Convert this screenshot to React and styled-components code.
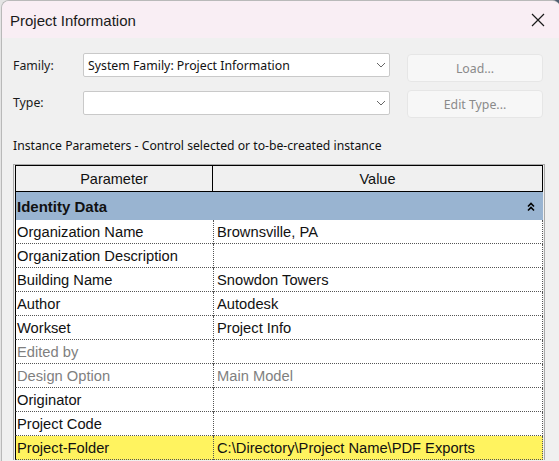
import React from "react";
import styled, { createGlobalStyle } from "styled-components";

const Global = createGlobalStyle`
  html, body { margin: 0; padding: 0; }
  body {
    width: 559px; height: 461px; overflow: hidden;
    background: linear-gradient(90deg, #e4e4e4 0%, #e4e4e4 70%, #5d6b7d 85%, #4e5c70 100%);
    font-family: "Noto Sans", "Liberation Sans", sans-serif;
  }
`;

const Window = styled.div`
  width: 559px; height: 461px; box-sizing: border-box;
  margin-left: 1px;
  border: 1px solid #b9b9b9; border-bottom: none; border-right: none;
  border-radius: 8px 8px 0 0; overflow: hidden;
  background: #f0f0f0; display: flex; flex-direction: column;
`;

const TitleBar = styled.div`
  height: 36px; flex: none; background: #f9eef4;
  display: flex; align-items: center; justify-content: space-between;
  padding: 1px 15px 0 8px;
`;

const Title = styled.span`
  font-family: "Liberation Sans", Arial, sans-serif;
  font-size: 15px; color: #1a1a1a;
`;

const Body = styled.div`
  padding: 16px 0 0 11px; display: flex; flex-direction: column;
`;

const FormGrid = styled.div`
  display: grid; grid-template-columns: 53px 307px 136px;
  column-gap: 17px; row-gap: 8px; grid-auto-rows: 28px; align-items: start;
`;

const Label = styled.div`
  font-size: 12.3px; color: #1a1a1a; line-height: 24px; margin-top: ${p => p.$dy}px;
`;

const Combo = styled.div`
  height: 24px; box-sizing: border-box; margin-top: ${p => p.$dy}px;
  background: #fff; border: 1px solid #c9c9c9; border-radius: 2px;
  display: flex; align-items: center; justify-content: space-between;
  padding: 0 3px 0 4px; font-size: 12.3px; color: #111;
`;

const Button = styled.div`
  height: 28px; box-sizing: border-box; border: 1px solid #e6e6e6;
  border-radius: 4px; background: #f7f7f7; color: #8a8a8a;
  font-size: 12.3px; display: flex; align-items: center; justify-content: center;
`;

const Caption = styled.div`
  margin-top: 20px; font-size: 12.2px; line-height: 16px; color: #111;
`;

const TableFrame = styled.div`
  margin-top: 10px; width: 532px; box-sizing: border-box;
  border: 1px solid #a9a9a9; border-bottom: none; padding: 0 1px;
  background: #f0f0f0;
`;

const Grid = styled.div`
  display: grid; grid-template-columns: 198px 1fr; width: 528px;
  font-family: "Liberation Sans", Arial, sans-serif;
`;

const HeadCell = styled.div`
  height: 27px; box-sizing: border-box; border: 1px solid #000;
  border-left: ${p => (p.$first ? "1px solid #000" : "none")};
  background: #f0f0f0; display: flex; align-items: center; justify-content: center;
  font-size: 14.5px; color: #111;
`;

const GroupRow = styled.div`
  grid-column: 1 / span 2; height: 28px; box-sizing: border-box;
  background: #99b4d1; border-left: 1px solid #000;
  display: flex; align-items: center; justify-content: space-between;
  padding: 1px 8px 0 1px; font-weight: bold; font-size: 15px; color: #111;
`;

const Cell = styled.div`
  height: 24px; box-sizing: border-box;
  padding: 0 0 0 ${p => (p.$first ? 1 : 3)}px;
  display: flex; align-items: center; white-space: nowrap;
  background: ${p => (p.$hl ? "#fff35f" : "#fff")};
  color: ${p => (p.$dim ? "#7f7f7f" : "#111")};
  font-size: 14.7px;
  border-bottom: 1px dotted #555;
  border-left: ${p => (p.$first ? "1px solid #000" : "1px dotted #555")};
  border-right: ${p => (p.$first ? "none" : "1px dotted #555")};
`;

const Chevron = () => (
  <svg width="10" height="6" viewBox="0 0 10 6">
    <path d="M1 1 L5 5 L9 1" fill="none" stroke="#666" strokeWidth="1" />
  </svg>
);

const Close = () => (
  <svg width="14" height="14" viewBox="0 0 14 14">
    <path d="M1 1 L13 13 M13 1 L1 13" stroke="#1a1a1a" strokeWidth="1.2" />
  </svg>
);

const Collapse = () => (
  <svg width="8" height="10" viewBox="0 0 8 10">
    <path d="M1 4.5 L4 1.5 L7 4.5 M1 8.5 L4 5.5 L7 8.5" fill="none" stroke="#000" strokeWidth="1.6" />
  </svg>
);

const rows = [
  ["Organization Name", "Brownsville, PA"],
  ["Organization Description", ""],
  ["Building Name", "Snowdon Towers"],
  ["Author", "Autodesk"],
  ["Workset", "Project Info"],
  ["Edited by", "", true],
  ["Design Option", "Main Model", true],
  ["Originator", ""],
  ["Project Code", ""],
  ["Project-Folder", "C:\\Directory\\Project Name\\PDF Exports", false, true],
];

export default function App() {
  return (
    <>
      <Global />
      <Window>
        <TitleBar>
          <Title>Project Information</Title>
          <Close />
        </TitleBar>
        <Body>
          <FormGrid>
            <Label $dy={0}>Family:</Label>
            <Combo $dy={-1}>
              <span>System Family: Project Information</span>
              <Chevron />
            </Combo>
            <Button>Load...</Button>
            <Label $dy={1}>Type:</Label>
            <Combo $dy={1}>
              <span />
              <Chevron />
            </Combo>
            <Button>Edit Type...</Button>
          </FormGrid>
          <Caption>Instance Parameters - Control selected or to-be-created instance</Caption>
          <TableFrame>
            <Grid>
              <HeadCell $first>Parameter</HeadCell>
              <HeadCell>Value</HeadCell>
              <GroupRow>
                <span>Identity Data</span>
                <Collapse />
              </GroupRow>
              {rows.map(([k, v, dim, hl]) => (
                <React.Fragment key={k}>
                  <Cell $first $dim={dim} $hl={hl}>{k}</Cell>
                  <Cell $dim={dim} $hl={hl}>{v}</Cell>
                </React.Fragment>
              ))}
            </Grid>
          </TableFrame>
        </Body>
      </Window>
    </>
  );
}
